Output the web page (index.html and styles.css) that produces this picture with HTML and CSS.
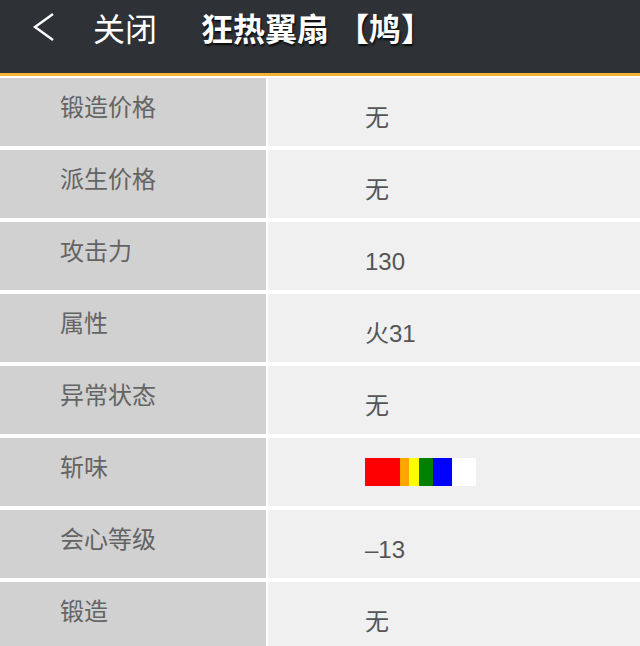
FILE: index.html
```html
<!DOCTYPE html>
<html lang="zh-CN">
<head>
<meta charset="utf-8">
<title>狂热翼扇【鸠】</title>
<link rel="stylesheet" href="styles.css">
</head>
<body>
<header class="topbar">
  <svg class="back" width="24" height="30" viewBox="0 0 24 30"><polyline points="21,2 3,15 21,28" fill="none" stroke="#fff" stroke-width="2.4" stroke-linejoin="miter"/></svg>
  <span class="close">关闭</span>
  <span class="title">狂热翼扇<span class="bracket">【鸠】</span></span>
</header>
<main class="table">
  <div class="row"><div class="label">锻造价格</div><div class="value">无</div></div>
  <div class="row"><div class="label">派生价格</div><div class="value">无</div></div>
  <div class="row"><div class="label">攻击力</div><div class="value">130</div></div>
  <div class="row"><div class="label">属性</div><div class="value">火31</div></div>
  <div class="row"><div class="label">异常状态</div><div class="value">无</div></div>
  <div class="row"><div class="label">斩味</div><div class="value">
    <div class="sharp">
      <span class="s-red" style="width:35px"></span><span class="s-orange" style="width:9px"></span><span class="s-yellow" style="width:10px"></span><span class="s-green" style="width:14px"></span><span class="s-blue" style="width:19px"></span><span class="s-white" style="width:24px"></span>
    </div>
  </div></div>
  <div class="row"><div class="label">会心等级</div><div class="value">–13</div></div>
  <div class="row"><div class="label">锻造</div><div class="value">无</div></div>
</main>
</body>
</html>
```
FILE: styles.css
```css
html, body {
  margin: 0;
  padding: 0;
  overflow: hidden;
  background: #ffffff;
  font-family: "Liberation Sans", "Noto Sans CJK SC", sans-serif;
}
.topbar {
  height: 73px;
  background: #2e3236;
  border-bottom: 3px solid #f2b431;
  display: flex;
  align-items: center;
  box-sizing: content-box;
  padding-left: 32px;
  color: #ffffff;
}
.back {
  display: block;
  margin-top: -19px;
}
.close {
  font-family: "Noto Sans CJK SC", sans-serif;
  font-size: 32px;
  line-height: 1;
  margin-left: 37px;
  margin-top: -19px;
}
.title {
  font-family: "Noto Sans CJK SC", sans-serif;
  font-size: 32px;
  font-weight: bold;
  line-height: 1;
  margin-left: 44px;
  margin-top: -19px;
  text-shadow: 1px 2px 2px rgba(0,0,0,0.8);
}
.bracket {
  margin-left: 8px;
}
.table {
  display: flex;
  flex-direction: column;
  gap: 4px;
  padding-top: 2px;
}
.row {
  display: grid;
  grid-template-columns: 266px 1fr;
  gap: 2px;
  height: 68px;
}
.label {
  background: #d1d1d1;
  color: #646464;
  font-size: 24px;
  line-height: 24px;
  padding: 16px 0 0 60px;
  font-family: "Noto Sans CJK SC", sans-serif;
}
.value {
  background: #f0f0f0;
  color: #555555;
  font-size: 24px;
  line-height: 24px;
  padding: 28px 0 0 97px;
}
.sharp {
  display: flex;
  height: 28px;
  margin-top: -8px;
}
.sharp span { display: block; height: 100%; }
.s-red { background: #ff0000; }
.s-orange { background: #ffa500; }
.s-yellow { background: #ffff00; }
.s-green { background: #008000; }
.s-blue { background: #0000ff; }
.s-white { background: #ffffff; }
```
